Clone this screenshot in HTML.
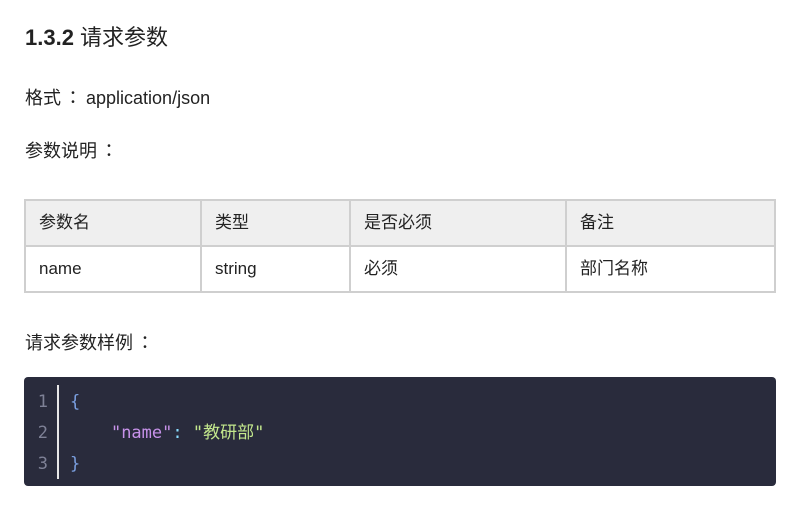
<!DOCTYPE html>
<html><head><meta charset="utf-8"><style>
body{margin:0;background:#fff;width:809px;height:511px;overflow:hidden;font-family:"Liberation Sans","Noto Sans CJK SC",sans-serif;color:#222;}
.t{position:absolute;left:25px;font-size:18px;white-space:nowrap;line-height:24px}
.cj{font-family:"WenQuanYi Zen Hei","Noto Sans CJK JP",sans-serif;padding:0 4px 0 3px}
h1{position:absolute;left:25px;top:20px;margin:0;font-size:22px;font-weight:normal}
h1 b{font-weight:bold}
table{position:absolute;left:24px;top:199px;border-collapse:collapse;font-size:17px;table-layout:fixed;width:750px}
td{border:2px solid #cfcfcf;height:46px;padding:0 0 0 13px;vertical-align:middle;box-sizing:border-box;line-height:20px}
td span{display:inline-block;vertical-align:middle}
tr.h td{background:#efefef}
.code{position:absolute;left:24px;top:377px;width:752px;height:109px;background:#292b3c;border-radius:4px;font-family:"DejaVu Sans Mono","Noto Sans CJK SC",monospace;font-size:17px}
.ln{position:absolute;left:12px;color:#7e8196;line-height:31px;top:10px;text-align:right;width:12px}
.bar{position:absolute;left:33px;top:8px;width:2px;height:94px;background:#e8e8e8}
.c{position:absolute;left:46px;top:10px;line-height:31px;color:#7a9fe0;white-space:pre}
.k{color:#c792ea}.s{color:#c3e88d}.p{color:#89ddff}
</style></head><body>
<h1><b>1.3.2</b> 请求参数</h1>
<div class="t" style="top:85px">格式<span class="cj">：</span>application/json</div>
<div class="t" style="top:138px">参数说明<span class="cj">：</span></div>
<table>
<colgroup><col style="width:176px"><col style="width:149px"><col style="width:216px"><col style="width:209px"></colgroup>
<tr class="h"><td><span>参数名</span></td><td><span>类型</span></td><td><span>是否必须</span></td><td><span>备注</span></td></tr>
<tr><td><span>name</span></td><td><span>string</span></td><td><span>必须</span></td><td><span>部门名称</span></td></tr>
</table>
<div class="t" style="top:330px">请求参数样例<span class="cj">：</span></div>
<div class="code">
<div class="ln">1<br>2<br>3</div>
<div class="bar"></div>
<div class="c">{
    <span class="k">"name"</span><span class="p">:</span> <span class="s">"教研部"</span>
}</div>
</div>
</body></html>
